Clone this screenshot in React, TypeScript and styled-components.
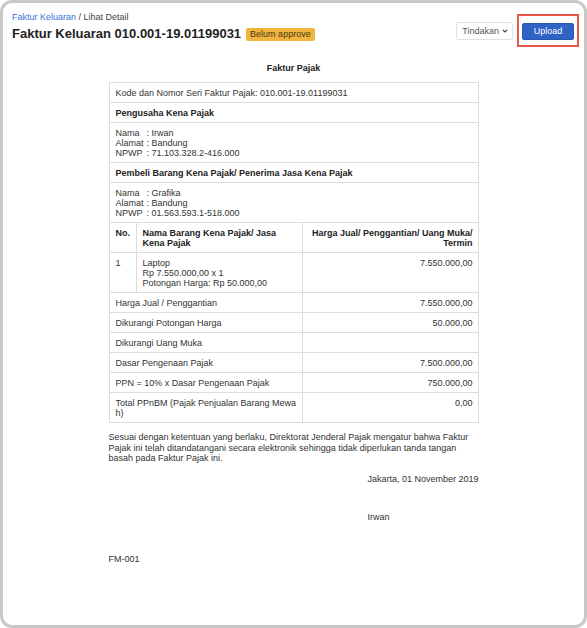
import React from "react";
import styled, { createGlobalStyle } from "styled-components";

const Global = createGlobalStyle`
  html, body { margin: 0; padding: 0; background: #fff; }
  body { font-family: "Liberation Sans", Arial, Helvetica, sans-serif; color: #333; }
  * { box-sizing: border-box; }
`;

const Frame = styled.div`
  width: 587px;
  height: 628px;
  border: 3px solid #c8c8c8;
  border-radius: 12px;
  background: #fff;
  overflow: hidden;
  display: flex;
  flex-direction: column;
`;

const Header = styled.header`
  display: flex;
  justify-content: space-between;
  align-items: flex-start;
  padding: 9px 10px 0 9px;
`;

const TitleBlock = styled.div`
  display: flex;
  flex-direction: column;
  gap: 3px;
`;

const Crumbs = styled.div`
  font-size: 9px;
  line-height: 11px;
  color: #444;
`;

const CrumbLink = styled.a`
  color: #3a72d8;
  text-decoration: none;
`;

const TitleRow = styled.div`
  display: flex;
  align-items: center;
  gap: 5px;
`;

const Title = styled.h1`
  margin: 0;
  font-size: 13px;
  line-height: 16px;
  font-weight: 700;
  color: #222;
`;

const Badge = styled.span`
  display: inline-block;
  background: #efb53e;
  color: #4a3a10;
  font-size: 9px;
  line-height: 13px;
  padding: 0 4px;
  border-radius: 2px;
`;

const Actions = styled.div`
  display: flex;
  align-items: center;
  gap: 9px;
  margin-top: 10px;
`;

const Dropdown = styled.button`
  display: flex;
  align-items: center;
  gap: 3px;
  height: 18px;
  padding: 0 4px 0 5px;
  border: 1px solid #e0e0e0;
  border-radius: 2px;
  background: #fff;
  color: #555;
  font: inherit;
  font-size: 9px;
`;

const Highlight = styled.div`
  position: relative;
  &::after {
    content: "";
    position: absolute;
    left: -5px;
    right: -5px;
    top: -9px;
    bottom: -7px;
    border: 2px solid #e8594a;
    pointer-events: none;
  }
`;

const PrimaryButton = styled.button`
  display: block;
  width: 52px;
  height: 17px;
  border: 1px solid #2a58b0;
  border-radius: 2px;
  background: #2f63c4;
  color: #fff;
  font: inherit;
  font-size: 9px;
  padding: 0;
`;

const Doc = styled.main`
  width: 370px;
  margin: 21px auto 0;
  font-size: 9px;
  line-height: 10px;
  color: #333;
`;

const DocTitle = styled.div`
  text-align: center;
  font-weight: 700;
  color: #222;
  margin-bottom: 9px;
`;

const Table = styled.table`
  width: 100%;
  border-collapse: collapse;
  table-layout: fixed;
`;

const Cell = styled.td<{ $align?: "left" | "right"; $bold?: boolean; $breakAll?: boolean }>`
  border: 1px solid #dcdcdc;
  padding: 5px 5px 4px 6px;
  vertical-align: top;
  text-align: ${(p) => p.$align ?? "left"};
  font-weight: ${(p) => (p.$bold ? 700 : 400)};
  color: ${(p) => (p.$bold ? "#222" : "#333")};
  word-break: ${(p) => (p.$breakAll ? "break-all" : "normal")};
`;

const InfoGrid = styled.div`
  display: grid;
  grid-template-columns: auto 1fr;
  column-gap: 3px;
`;

const Note = styled.p`
  margin: 9px 0 0;
  line-height: 10.5px;
`;

const Signature = styled.div`
  display: flex;
  justify-content: flex-end;
  margin-top: 10px;
`;

const SignBlock = styled.div`
  display: flex;
  flex-direction: column;
  gap: 28px;
`;

const FormCode = styled.div`
  margin-top: 32px;
`;

const Chevron = () => (
  <svg width="6" height="4" viewBox="0 0 6 4" fill="none">
    <path d="M0.8 0.8l2.2 2.2 2.2-2.2" stroke="#444" strokeWidth="1.2" />
  </svg>
);

const Party = ({ nama, alamat, npwp }: { nama: string; alamat: string; npwp: string }) => (
  <InfoGrid>
    <span>Nama</span>
    <span>: {nama}</span>
    <span>Alamat</span>
    <span>: {alamat}</span>
    <span>NPWP</span>
    <span>: {npwp}</span>
  </InfoGrid>
);

const summary: [string, string][] = [
  ["Harga Jual / Penggantian", "7.550.000,00"],
  ["Dikurangi Potongan Harga", "50.000,00"],
  ["Dikurangi Uang Muka", ""],
  ["Dasar Pengenaan Pajak", "7.500.000,00"],
  ["PPN = 10% x Dasar Pengenaan Pajak", "750.000,00"],
  ["Total PPnBM (Pajak Penjualan Barang Mewah)", "0,00"],
];

export default function App() {
  return (
    <>
      <Global />
      <Frame>
        <Header>
          <TitleBlock>
            <Crumbs>
              <CrumbLink href="#">Faktur Keluaran</CrumbLink> / Lihat Detail
            </Crumbs>
            <TitleRow>
              <Title>Faktur Keluaran 010.001-19.01199031</Title>
              <Badge>Belum approve</Badge>
            </TitleRow>
          </TitleBlock>
          <Actions>
            <Dropdown>
              Tindakan <Chevron />
            </Dropdown>
            <Highlight>
              <PrimaryButton>Upload</PrimaryButton>
            </Highlight>
          </Actions>
        </Header>
        <Doc>
          <DocTitle>Faktur Pajak</DocTitle>
          <Table>
            <colgroup>
              <col style={{ width: 27 }} />
              <col style={{ width: 166 }} />
              <col />
            </colgroup>
            <tbody>
              <tr>
                <Cell colSpan={3}>Kode dan Nomor Seri Faktur Pajak: 010.001-19.01199031</Cell>
              </tr>
              <tr>
                <Cell colSpan={3} $bold>
                  Pengusaha Kena Pajak
                </Cell>
              </tr>
              <tr>
                <Cell colSpan={3}>
                  <Party nama="Irwan" alamat="Bandung" npwp="71.103.328.2-416.000" />
                </Cell>
              </tr>
              <tr>
                <Cell colSpan={3} $bold>
                  Pembeli Barang Kena Pajak/ Penerima Jasa Kena Pajak
                </Cell>
              </tr>
              <tr>
                <Cell colSpan={3}>
                  <Party nama="Grafika" alamat="Bandung" npwp="01.563.593.1-518.000" />
                </Cell>
              </tr>
              <tr>
                <Cell $bold>No.</Cell>
                <Cell $bold>Nama Barang Kena Pajak/ Jasa Kena Pajak</Cell>
                <Cell $bold $align="right">
                  Harga Jual/ Penggantian/ Uang Muka/ Termin
                </Cell>
              </tr>
              <tr>
                <Cell>1</Cell>
                <Cell>
                  Laptop
                  <br />
                  Rp 7.550.000,00 x 1
                  <br />
                  Potongan Harga: Rp 50.000,00
                </Cell>
                <Cell $align="right">7.550.000,00</Cell>
              </tr>
              {summary.map(([label, value], i) => (
                <tr key={i}>
                  <Cell colSpan={2} $breakAll>
                    {label}
                  </Cell>
                  <Cell $align="right">{value}</Cell>
                </tr>
              ))}
            </tbody>
          </Table>
          <Note>
            Sesuai dengan ketentuan yang berlaku, Direktorat Jenderal Pajak mengatur bahwa Faktur Pajak ini
            telah ditandatangani secara elektronik sehingga tidak diperlukan tanda tangan basah pada Faktur
            Pajak ini.
          </Note>
          <Signature>
            <SignBlock>
              <span>Jakarta, 01 November 2019</span>
              <span>Irwan</span>
            </SignBlock>
          </Signature>
          <FormCode>FM-001</FormCode>
        </Doc>
      </Frame>
    </>
  );
}
